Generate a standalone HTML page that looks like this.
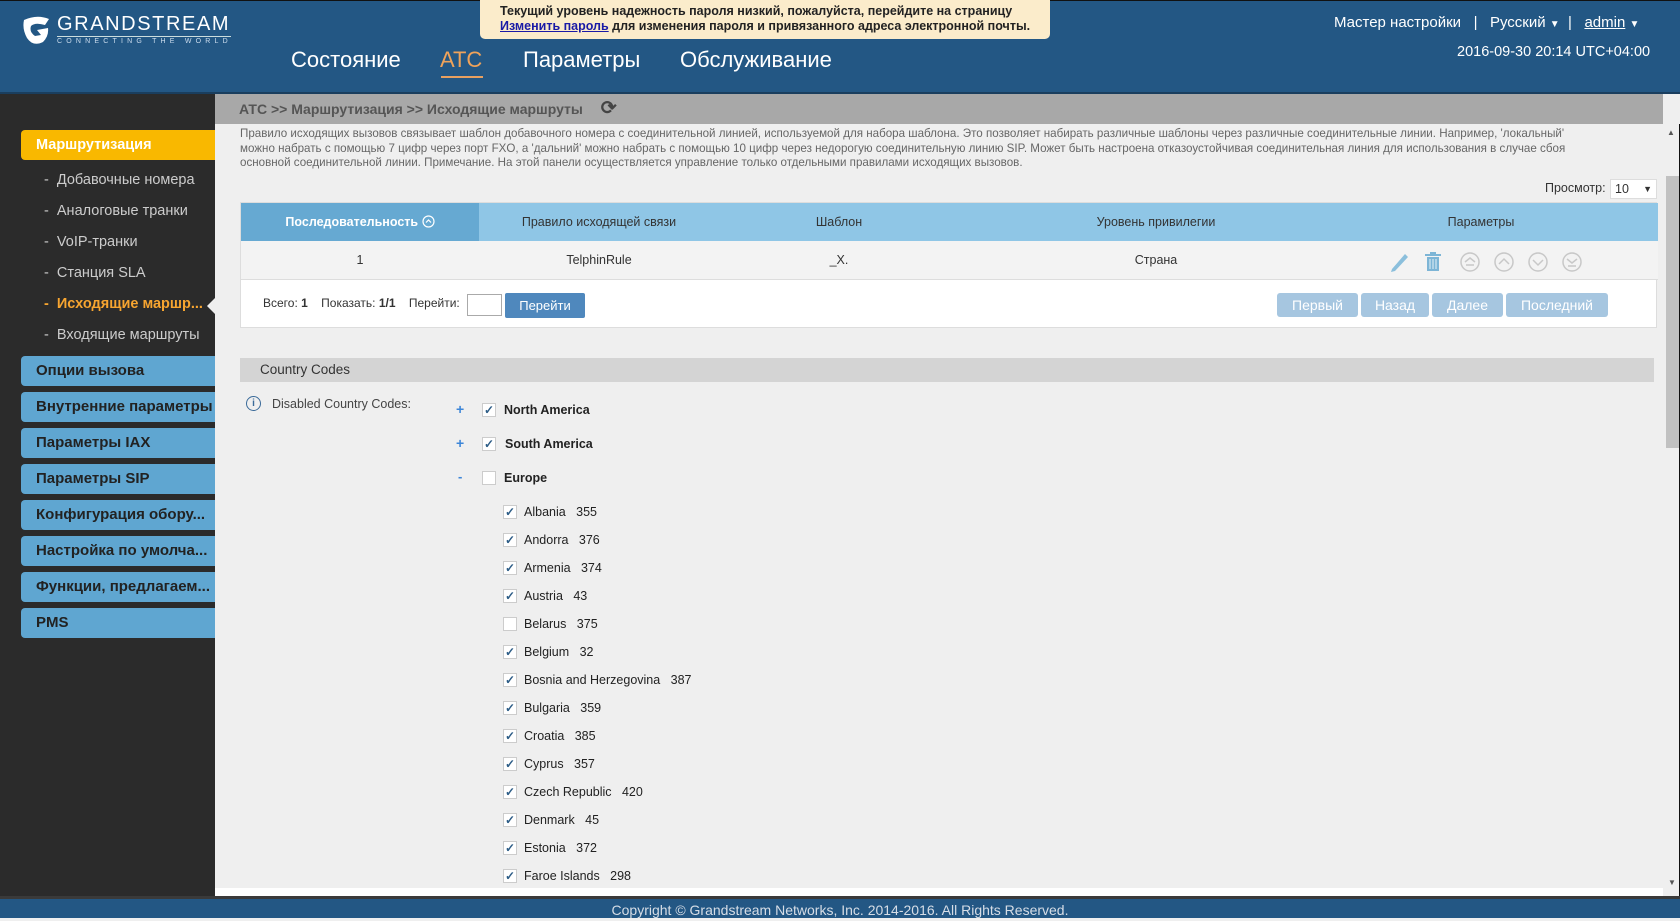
<!DOCTYPE html>
<html><head><meta charset="utf-8">
<style>
*{margin:0;padding:0;box-sizing:border-box}
body{width:1680px;height:918px;overflow:hidden;background:#efefef;font-family:"Liberation Sans",Arial,sans-serif;position:relative;color:#333}
.abs{position:absolute}
#hdr{left:0;top:0;width:1680px;height:94px;background:#235784;border-bottom:2px solid #1a3e5e;border-top:1px solid #111}
#side{left:0;top:94px;width:215px;height:802px;background:#2b2b2b}
#foot{left:0;top:896px;width:1680px;height:22px;background:#235784;color:#d6dde6;font-size:14px;text-align:center;line-height:22px;border-top:3px solid #3a3a3a}
#crumb{left:215px;top:94px;width:1448px;height:30px;background:#a8a8a8;color:#555;font-weight:bold;font-size:14px;line-height:30px;padding-left:24px}
.nav{color:#fff;font-size:22px;top:46px}
.tr{color:#fff;font-size:15px}
.sub{color:#ccc;font-size:14.5px;left:44px}
.blue{left:21px;width:194px;height:30px;background:#5fa6d1;border-radius:4px 0 0 4px;color:#222;font-weight:bold;font-size:15px;line-height:30px;padding-left:15px}
.desc{left:240px;top:127px;width:1350px;font-size:11.6px;line-height:14.5px;color:#666}
.cb{width:14px;height:14px;border:1px solid #ccc;background:#fff;display:inline-block;position:absolute;font-size:12px;line-height:12px;text-align:center;color:#2c5c86;font-weight:bold}
.lbl{position:absolute;font-size:12.5px;color:#222}
.btn{position:absolute;top:293px;height:24px;background:#a6c6e0;color:#fff;font-size:14px;line-height:24px;text-align:center;border-radius:3px}
</style></head><body>
<div id="hdr" class="abs">
  <svg class="abs" style="left:21px;top:13px" width="32" height="32" viewBox="0 0 32 32"><path d="M3 6 Q16 0 28 5 L24 11 Q14 8 10 12 Q8 18 14 22 L20 21 L16 16 L27 14 Q28 22 22 28 Q12 33 6 24 Q1 15 3 6Z" fill="#fff"/></svg>
  <div class="abs" style="left:57px;top:12px;color:#fff;font-size:20px;letter-spacing:1.6px;font-weight:300">GRANDSTREAM</div>
  <div class="abs" style="left:57px;top:35px;width:174px;border-top:1px solid #cdd;"></div>
  <div class="abs" style="left:57px;top:37px;color:#cde;font-size:7px;letter-spacing:4.2px">CONNECTING THE WORLD</div>
  <div class="abs" style="left:480px;top:-1px;width:570px;height:39px;background:#fbeccb;border-radius:0 0 5px 5px;font-size:12.5px;font-weight:bold;color:#222;padding:4px 0 0 20px;line-height:15px">Текущий уровень надежность пароля низкий, пожалуйста, перейдите на страницу<br><span style="color:#1a1aa6;text-decoration:underline">Изменить пароль</span> для изменения пароля и привязанного адреса электронной почты.</div>
  <div class="abs nav" style="left:291px">Состояние</div>
  <div class="abs nav" style="left:440px;color:#f0a35a">АТС</div>
  <div class="abs" style="left:441px;top:75px;width:42px;height:2px;background:#e8a060"></div>
  <div class="abs nav" style="left:523px">Параметры</div>
  <div class="abs nav" style="left:680px">Обслуживание</div>
  <div class="abs tr" style="left:1334px;top:13px">Мастер настройки &nbsp;&nbsp;| &nbsp;&nbsp;Русский <span style="font-size:10px">▼</span> &nbsp;| &nbsp;&nbsp;<u>admin</u> <span style="font-size:10px">▼</span></div>
  <div class="abs tr" style="left:1457px;top:43px;font-size:14.5px">2016-09-30 20:14 UTC+04:00</div>
</div>
<div id="side" class="abs">
  <div class="abs" style="left:21px;top:36px;width:194px;height:30px;background:#f9b800;border-radius:4px 0 0 4px;color:#fff;font-weight:bold;font-size:14.5px;line-height:30px;padding-left:15px">Маршрутизация</div>
  <div class="abs sub" style="top:78px">-&nbsp; Добавочные номера</div>
  <div class="abs sub" style="top:109px">-&nbsp; Аналоговые транки</div>
  <div class="abs sub" style="top:140px">-&nbsp; VoIP-транки</div>
  <div class="abs sub" style="top:171px">-&nbsp; Станция SLA</div>
  <div class="abs sub" style="top:202px;color:#f7a530;font-weight:bold">-&nbsp; Исходящие маршр...</div>
  <div class="abs" style="left:207px;top:204px;width:0;height:0;border-top:8px solid transparent;border-bottom:8px solid transparent;border-right:8px solid #efefef"></div>
  <div class="abs sub" style="top:233px">-&nbsp; Входящие маршруты</div>
  <div class="abs blue" style="top:262px">Опции вызова</div>
  <div class="abs blue" style="top:298px">Внутренние параметры</div>
  <div class="abs blue" style="top:334px">Параметры IAX</div>
  <div class="abs blue" style="top:370px">Параметры SIP</div>
  <div class="abs blue" style="top:406px">Конфигурация обору...</div>
  <div class="abs blue" style="top:442px">Настройка по умолча...</div>
  <div class="abs blue" style="top:478px">Функции, предлагаем...</div>
  <div class="abs blue" style="top:514px">PMS</div>
</div>
<div id="crumb" class="abs">АТС &gt;&gt; Маршрутизация &gt;&gt; Исходящие маршруты <span style="font-size:19px;margin-left:14px;color:#444">⟳</span></div>
<div class="abs desc">Правило исходящих вызовов связывает шаблон добавочного номера с соединительной линией, используемой для набора шаблона. Это позволяет набирать различные шаблоны через различные соединительные линии. Например, 'локальный' можно набрать с помощью 7 цифр через порт FXO, а 'дальний' можно набрать с помощью 10 цифр через недорогую соединительную линию SIP. Может быть настроена отказоустойчивая соединительная линия для использования в случае сбоя основной соединительной линии. Примечание. На этой панели осуществляется управление только отдельными правилами исходящих вызовов.</div>
<div class="abs" style="left:1545px;top:181px;font-size:12.5px;color:#333">Просмотр:</div>
<div class="abs" style="left:1610px;top:179px;width:47px;height:20px;background:#fff;border:1px solid #ddd;font-size:12.5px;line-height:18px;padding-left:4px">10 <span style="float:right;margin-right:4px;font-size:9px">▼</span></div>
<div class="abs" style="left:240px;top:202px;width:1417px;height:126px;background:#fff;border:1px solid #ddd">
  <div class="abs" style="left:0;top:0;width:1417px;height:38px;background:#8fc6e6"></div>
  <div class="abs" style="left:0;top:0;width:238px;height:38px;background:#66a9d2;color:#fff;font-weight:bold;font-size:12.5px;text-align:center;line-height:38px">Последовательность <svg width="13" height="13" viewBox="0 0 13 13" style="vertical-align:-2px"><circle cx="6.5" cy="6.5" r="5.5" fill="none" stroke="#fff" stroke-width="1.2"/><path d="M4 7.5 L6.5 5 L9 7.5" fill="none" stroke="#fff" stroke-width="1.2"/></svg></div>
  <div class="abs" style="left:238px;top:0;width:240px;text-align:center;line-height:38px;font-size:12.5px;color:#333">Правило исходящей связи</div>
  <div class="abs" style="left:478px;top:0;width:240px;text-align:center;line-height:38px;font-size:12.5px">Шаблон</div>
  <div class="abs" style="left:750px;top:0;width:330px;text-align:center;line-height:38px;font-size:12.5px">Уровень привилегии</div>
  <div class="abs" style="left:1120px;top:0;width:240px;text-align:center;line-height:38px;font-size:12.5px">Параметры</div>
  <div class="abs" style="left:0;top:38px;width:1417px;height:39px;background:#f3f3f3;border-bottom:1px solid #ddd"></div>
  <div class="abs" style="left:0;top:38px;width:238px;text-align:center;line-height:39px;font-size:12.5px">1</div>
  <div class="abs" style="left:238px;top:38px;width:240px;text-align:center;line-height:39px;font-size:12.5px">TelphinRule</div>
  <div class="abs" style="left:478px;top:38px;width:240px;text-align:center;line-height:39px;font-size:12.5px">_X.</div>
  <div class="abs" style="left:750px;top:38px;width:330px;text-align:center;line-height:39px;font-size:12.5px">Страна</div>
  <svg class="abs" style="left:1148px;top:46px" width="230" height="24" viewBox="0 0 230 24">
    <path d="M3 20 L16 5 L19 8 L6 22 L2 23Z" fill="#8bbfdc"/>
    <rect x="36" y="5" width="16" height="2" fill="#7db5d6"/><rect x="41" y="3" width="6" height="2" fill="#7db5d6"/>
    <rect x="38" y="8" width="12" height="14" fill="#7db5d6"/>
    <path d="M41 10 V20 M44 10 V20 M47 10 V20" stroke="#e8f2f8" stroke-width="1"/>
    <g fill="none" stroke="#c8c8c8" stroke-width="1.5">
      <circle cx="81" cy="13" r="9"/><path d="M76 13 L81 9 L86 13 M77 16 H85"/>
      <circle cx="115" cy="13" r="9"/><path d="M110 15 L115 10 L120 15"/>
      <circle cx="149" cy="13" r="9"/><path d="M144 11 L149 16 L154 11"/>
      <circle cx="183" cy="13" r="9"/><path d="M178 10 L183 14 L188 10 M179 17 H187"/>
    </g>
  </svg>
  <div class="abs" style="left:22px;top:93px;font-size:12px;color:#333">Всего: <b>1</b> &nbsp;&nbsp; Показать: <b>1/1</b> &nbsp;&nbsp; Перейти:</div>
  <div class="abs" style="left:226px;top:91px;width:35px;height:22px;border:1px solid #aaa;background:#fff"></div>
  <div class="abs" style="left:264px;top:90px;width:80px;height:25px;background:#4f88bd;color:#fff;font-size:13px;text-align:center;line-height:25px;border-radius:2px">Перейти</div>
</div>
<div class="btn" style="left:1277px;width:81px">Первый</div>
<div class="btn" style="left:1361px;width:68px">Назад</div>
<div class="btn" style="left:1432px;width:71px">Далее</div>
<div class="btn" style="left:1506px;width:102px">Последний</div>
<div class="abs" style="left:240px;top:358px;width:1414px;height:24px;background:#d4d4d4;font-size:13.5px;line-height:24px;padding-left:20px;color:#333">Country Codes</div>
<div class="abs" style="left:246px;top:396px;width:15px;height:15px;border:1.3px solid #3a6a99;border-radius:50%;color:#3a6a99;font-size:10px;text-align:center;line-height:13px;font-weight:bold">i</div>
<div class="abs" style="left:272px;top:397px;font-size:12.5px;color:#444">Disabled Country Codes:</div>
<div class="abs" style="left:456px;top:401px;color:#3d86d8;font-weight:bold;font-size:14px">+</div>
<div class="abs" style="left:456px;top:435px;color:#3d86d8;font-weight:bold;font-size:14px">+</div>
<div class="abs" style="left:458px;top:469px;color:#3d86d8;font-weight:bold;font-size:13px">-</div>
<span class="cb" style="left:482px;top:403px">✓</span><span class="lbl" style="left:504px;top:403px;font-weight:bold">North America</span>
<span class="cb" style="left:482px;top:437px">✓</span><span class="lbl" style="left:505px;top:437px;font-weight:bold">South America</span>
<span class="cb" style="left:482px;top:471px"></span><span class="lbl" style="left:504px;top:471px;font-weight:bold">Europe</span>
<span class="cb" style="left:503px;top:505px">✓</span><span class="lbl" style="left:524px;top:505px">Albania &nbsp; 355</span>
<span class="cb" style="left:503px;top:533px">✓</span><span class="lbl" style="left:524px;top:533px">Andorra &nbsp; 376</span>
<span class="cb" style="left:503px;top:561px">✓</span><span class="lbl" style="left:524px;top:561px">Armenia &nbsp; 374</span>
<span class="cb" style="left:503px;top:589px">✓</span><span class="lbl" style="left:524px;top:589px">Austria &nbsp; 43</span>
<span class="cb" style="left:503px;top:617px"></span><span class="lbl" style="left:524px;top:617px">Belarus &nbsp; 375</span>
<span class="cb" style="left:503px;top:645px">✓</span><span class="lbl" style="left:524px;top:645px">Belgium &nbsp; 32</span>
<span class="cb" style="left:503px;top:673px">✓</span><span class="lbl" style="left:524px;top:673px">Bosnia and Herzegovina &nbsp; 387</span>
<span class="cb" style="left:503px;top:701px">✓</span><span class="lbl" style="left:524px;top:701px">Bulgaria &nbsp; 359</span>
<span class="cb" style="left:503px;top:729px">✓</span><span class="lbl" style="left:524px;top:729px">Croatia &nbsp; 385</span>
<span class="cb" style="left:503px;top:757px">✓</span><span class="lbl" style="left:524px;top:757px">Cyprus &nbsp; 357</span>
<span class="cb" style="left:503px;top:785px">✓</span><span class="lbl" style="left:524px;top:785px">Czech Republic &nbsp; 420</span>
<span class="cb" style="left:503px;top:813px">✓</span><span class="lbl" style="left:524px;top:813px">Denmark &nbsp; 45</span>
<span class="cb" style="left:503px;top:841px">✓</span><span class="lbl" style="left:524px;top:841px">Estonia &nbsp; 372</span>
<span class="cb" style="left:503px;top:869px">✓</span><span class="lbl" style="left:524px;top:869px">Faroe Islands &nbsp; 298</span>
<div class="abs" style="left:215px;top:888px;width:1448px;height:8px;background:#fff"></div>
<div class="abs" style="left:1663px;top:124px;width:17px;height:772px;background:#efefef;border-right:1px solid #111"></div>
<div class="abs" style="left:1666px;top:176px;width:13px;height:272px;background:#c1c1c1"></div>
<div class="abs" style="left:1667px;top:128px;font-size:8px;color:#555">▲</div>
<div class="abs" style="left:1668px;top:878px;font-size:8px;color:#555">▼</div>
<div id="foot" class="abs">Copyright © Grandstream Networks, Inc. 2014-2016. All Rights Reserved.</div>
</body></html>
